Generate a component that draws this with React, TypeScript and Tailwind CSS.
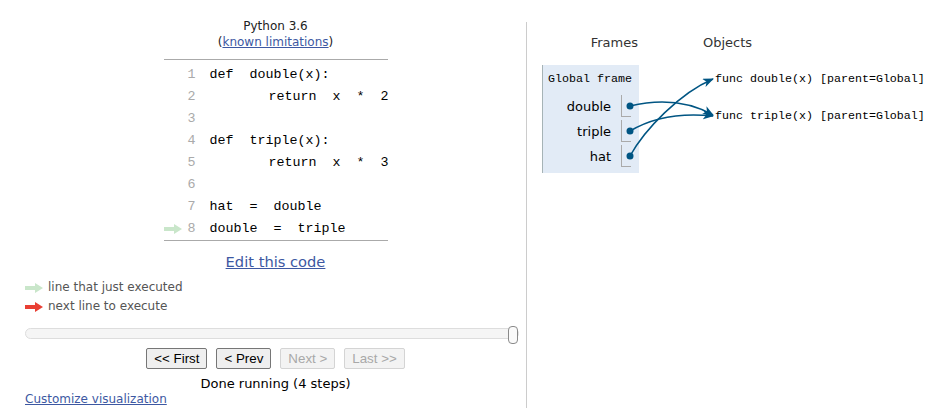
import React from 'react';

const code: { n: number; indent?: boolean; text: string }[] = [
  { n: 1, text: 'def  double(x):' },
  { n: 2, indent: true, text: 'return  x  *  2' },
  { n: 3, text: '' },
  { n: 4, text: 'def  triple(x):' },
  { n: 5, indent: true, text: 'return  x  *  3' },
  { n: 6, text: '' },
  { n: 7, text: 'hat  =  double' },
  { n: 8, text: 'double  =  triple' },
];

const vars = ['double', 'triple', 'hat'];

function Arrow({ color }: { color: string }) {
  return (
    <svg width="18" height="10" viewBox="0 0 18 10" className="block">
      <path d="M0 3 H10 V0 L18 5 L10 10 V7 H0 Z" fill={color} />
    </svg>
  );
}

export default function App() {
  return (
    <div className="relative w-[948px] h-[408px] bg-white flex overflow-hidden font-['DejaVu_Sans',Verdana,sans-serif] text-black">
      {/* left: code + controls */}
      <div className="w-[526px] shrink-0 pl-[25px] flex flex-col">
        <div className="pt-[18px] text-center text-[12px] leading-[16px] text-[#222]">
          <div>Python 3.6</div>
          <div>
            (<a className="text-[#3D58A2] underline">known limitations</a>)
          </div>
        </div>

        <div className="mt-[9px] mx-auto w-[224px] border-y border-[#aaaaaa] pt-[4px] font-['Liberation_Mono',monospace] text-[13.33px]">
          {code.map((l) => (
            <div key={l.n} className="flex items-center h-[22px]">
              <div className="w-[20px] shrink-0">
                {l.n === 8 && <Arrow color="#c9e6ca" />}
              </div>
              <div className="w-[12px] shrink-0 text-right text-[#aaaaaa]">{l.n}</div>
              <div className={`whitespace-pre ${l.indent ? 'pl-[73px]' : 'pl-[14px]'}`}>{l.text}</div>
            </div>
          ))}
        </div>

        <div className="mt-[12px] text-center text-[14.67px] leading-[18px]">
          <a className="text-[#3D58A2] underline">Edit this code</a>
        </div>

        <div className="mt-[7px] text-[12px] leading-[19px] text-[#555]">
          <div className="flex items-center gap-[5px]">
            <Arrow color="#c9e6ca" />
            <span>line that just executed</span>
          </div>
          <div className="flex items-center gap-[5px]">
            <Arrow color="#e93f34" />
            <span>next line to execute</span>
          </div>
        </div>

        <div className="relative mt-[12px] w-[494px] h-[11px] rounded-full border border-[#dddddd] bg-[#f5f5f5]">
          <div className="absolute right-0 top-[-3px] w-[10px] h-[18px] rounded-[4px] border border-[#8a8a8a] bg-[#fafafa]" />
        </div>

        <div className="mt-[9px] flex justify-center gap-[9px] font-['Liberation_Sans',Arial,sans-serif] text-[13.33px]">
          <button className="h-[21px] px-[7px] rounded-[2px] border border-[#767676] bg-[#efefef] text-black leading-none">
            &lt;&lt; First
          </button>
          <button className="h-[21px] px-[7px] rounded-[2px] border border-[#767676] bg-[#efefef] text-black leading-none">
            &lt; Prev
          </button>
          <button className="h-[21px] px-[7px] rounded-[2px] border border-[#d4d4d4] bg-[#f3f3f3] text-[#a8a8a8] leading-none">
            Next &gt;
          </button>
          <button className="h-[21px] px-[7px] rounded-[2px] border border-[#d4d4d4] bg-[#f3f3f3] text-[#a8a8a8] leading-none">
            Last &gt;&gt;
          </button>
        </div>

        <div className="mt-[7px] text-center text-[13px] leading-[16px]">Done running (4 steps)</div>
        <div className="text-[12px] leading-[15px]">
          <a className="text-[#3D58A2] underline">Customize visualization</a>
        </div>
      </div>

      {/* right: frames + objects */}
      <div className="mt-[22px] flex-1 border-l border-[#cccccc] pl-[15px]">
        <div className="pt-[13px] flex text-[13px] leading-[16px] text-[#333]">
          <div className="w-[97px] text-right pr-[1px]">Frames</div>
          <div className="ml-[64px]">Objects</div>
        </div>

        <div className="mt-[14px] flex items-start">
          <div className="w-[97px] h-[108px] bg-[#e2ebf6] border-l border-[#a6b3b6]">
            <div className="pt-[7px] pl-[5px] font-['Liberation_Mono',monospace] text-[11.67px] leading-[14px]">
              Global frame
            </div>
            <div className="mt-[9px] flex flex-col gap-[3px]">
              {vars.map((v) => (
                <div key={v} className="flex h-[22px]">
                  <div className="w-[68px] text-right text-[13px] leading-[24px]">{v}</div>
                  <div className="ml-[10px] w-[10px] h-[22px] border-l border-b border-[#aaaaaa]" />
                </div>
              ))}
            </div>
          </div>

          <div className="ml-[76px] pt-[7px] font-['Liberation_Mono',monospace] text-[11.67px] leading-[14px] whitespace-pre">
            <div>func double(x) [parent=Global]</div>
            <div className="mt-[23px]">func triple(x) [parent=Global]</div>
          </div>
        </div>
      </div>

      {/* pointer connectors */}
      <svg className="absolute left-0 top-0 pointer-events-none" width="948" height="408">
        <defs>
          <marker id="ah" markerUnits="userSpaceOnUse" markerWidth="11" markerHeight="9" refX="10" refY="4.5" orient="auto">
            <path d="M0 0 L11 4.5 L0 9 L3 4.5 Z" fill="#005583" />
          </marker>
        </defs>
        <g stroke="#005583" strokeWidth="1.5" fill="none">
          <path d="M630 106 C660 99 688 101 713 115" markerEnd="url(#ah)" />
          <path d="M630 131 C650 119 675 112 713 116" markerEnd="url(#ah)" />
          <path d="M630 156 C645 129 680 93 713 79" markerEnd="url(#ah)" />
        </g>
        <g fill="#005583">
          <circle cx="630" cy="106" r="3.5" />
          <circle cx="630" cy="131" r="3.5" />
          <circle cx="630" cy="156" r="3.5" />
        </g>
      </svg>
    </div>
  );
}
